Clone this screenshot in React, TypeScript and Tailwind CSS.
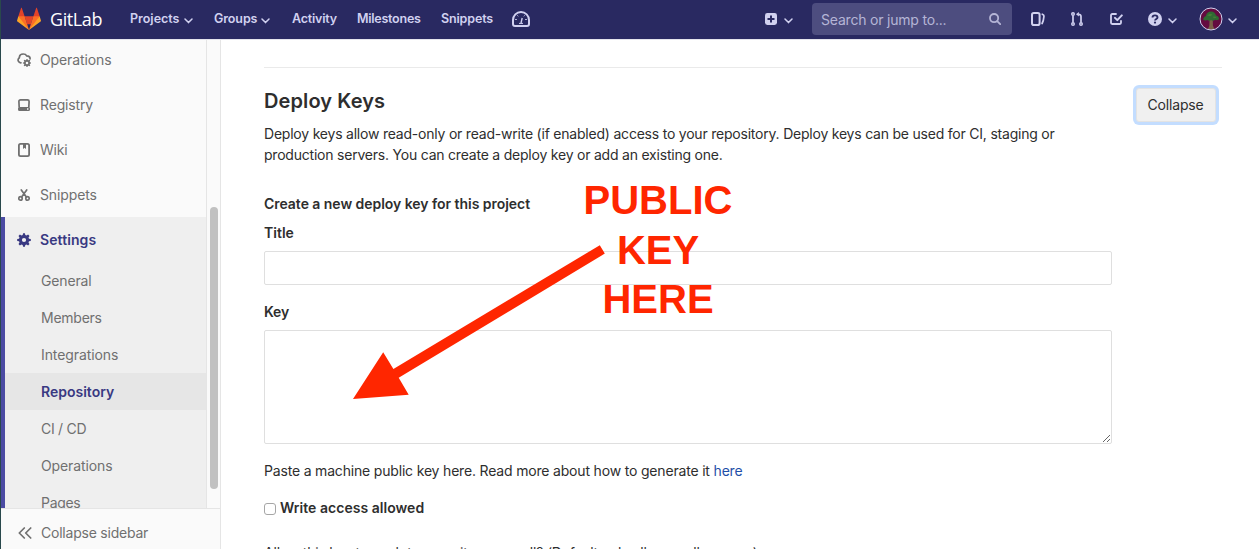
import React from "react";

type IconProps = { className?: string };

const Chevron = ({ className = "" }: IconProps) => (
  <svg className={`h-[6px] w-[9px] shrink-0 ${className}`} viewBox="0 0 9 6" fill="none" stroke="#d1d1f0" strokeWidth="1.5" strokeLinecap="round" strokeLinejoin="round">
    <path d="M1 1l3.5 3.6L8 1" />
  </svg>
);

const Tanuki = () => (
  <svg className="h-6 w-6 shrink-0" viewBox="0 0 36 36">
    <path fill="#e24329" d="M2 14l9.38 9v-9l-4-12.28c-.205-.632-1.176-.632-1.38 0z" />
    <path fill="#e24329" d="M34 14l-9.38 9v-9l4-12.28c.205-.632 1.176-.632 1.38 0z" />
    <path fill="#e24329" d="M18 34.38l3-8.38h-6z M18 34.38L11.38 14h13.24z" />
    <path fill="#fc6d26" d="M18 34.38L11.38 14H2l6 11.5z" />
    <path fill="#fc6d26" d="M18 34.38L24.62 14H34l-6 11.5z" />
    <path fill="#fca326" d="M2 14L.1 20.16c-.18.565 0 1.2.5 1.56l17.42 12.66z" />
    <path fill="#fca326" d="M34 14l1.9 6.16c.18.565 0 1.2-.5 1.56L18 34.38z" />
  </svg>
);

const Gauge = () => (
  <svg className="h-4 w-[18px] shrink-0" viewBox="0 0 18 16" fill="none" stroke="#d1d1f0">
    <path strokeWidth="2" d="M3 15h12a2 2 0 0 0 2-2V9A8 8 0 0 0 1 9v4a2 2 0 0 0 2 2z" />
    <path strokeWidth="1" d="M3.2 8.5h1.6M13.2 8.5h1.6M5.4 4.4l.8.9M12.6 4.4l-.8.9M7 12.4h4" />
    <path strokeWidth="1.4" d="M9 12l1.2-5" />
  </svg>
);

const PlusSquare = () => (
  <svg className="h-3 w-3 shrink-0" viewBox="0 0 12 12">
    <rect width="12" height="12" rx="2.4" fill="#d1d1f0" />
    <path d="M6 2.5v7M2.5 6h7" stroke="#292961" strokeWidth="2" />
  </svg>
);

const Search = () => (
  <svg className="h-3 w-3 shrink-0" viewBox="0 0 12 12" fill="none" stroke="#b5b5d6" strokeWidth="1.8" strokeLinecap="round">
    <circle cx="5.1" cy="5.1" r="4.1" />
    <path d="M8.2 8.2l3 3" />
  </svg>
);

const Issues = () => (
  <svg className="h-[14px] w-[14px] shrink-0" viewBox="0 0 14 14" fill="none" stroke="#d1d1f0" strokeWidth="2">
    <rect x="1" y="1" width="7.6" height="12" rx="1.8" />
    <path strokeLinecap="round" strokeWidth="1.7" d="M11.3 2.2c1.5.5 1.8 1.3 1.6 2.4-.2 2.6-.7 4.8-1.8 6.9" />
  </svg>
);

const MergeRequest = () => (
  <svg className="h-[14px] w-3 shrink-0" viewBox="0 0 12 14" fill="none" stroke="#d1d1f0" strokeWidth="1.5">
    <circle cx="2" cy="2" r="1.25" />
    <circle cx="2" cy="12" r="1.25" />
    <circle cx="10" cy="12" r="1.25" />
    <path strokeWidth="1.7" d="M2 3.5v7M10 10.5V4.5Q10 2.3 7.6 2.3" />
    <path fill="#d1d1f0" stroke="none" d="M7.9 0v4.6L5 2.3z" />
  </svg>
);

const Todo = () => (
  <svg className="h-3 w-[13px] shrink-0" viewBox="0 0 13 12" fill="none" stroke="#d1d1f0" strokeWidth="1.8" strokeLinecap="round" strokeLinejoin="round">
    <path d="M6 1H2.2A1.2 1.2 0 0 0 1 2.2v7.6A1.2 1.2 0 0 0 2.2 11h7.6a1.2 1.2 0 0 0 1.2-1.2V7.8" />
    <path strokeWidth="2" d="M5 4.900l2.300 2.200 4.500-4.700" />
  </svg>
);

const Help = () => (
  <svg className="h-[14px] w-[14px] shrink-0" viewBox="0 0 14 14">
    <circle cx="7" cy="7" r="7" fill="#d1d1f0" />
    <path fill="none" stroke="#292961" strokeWidth="1.9" d="M4.500 5.500c0-1.300 1.100-2.100 2.500-2.100s2.500.8 2.500 2c0 1.500-2.500 1.600-2.500 3.200" />
    <circle cx="7" cy="10.6" r="1.1" fill="#292961" />
  </svg>
);

const Avatar = () => (
  <svg className="h-6 w-6 shrink-0" viewBox="0 0 24 24">
    <circle cx="12" cy="12" r="11" fill="#640b40" />
    <path fill="#7a6148" d="M10.600 12h3.200l.1 6.500 1.500 3.700-3.400.6-3.200-.6 1.500-3.200z" />
    <path fill="#2f6a33" d="M4.200 12.500c.2-2 1.300-3 2.800-3.500.2-2.600 2.500-4.400 5-4.400 2.800 0 4.500 1.700 5 4 2 .4 3 1.700 3.100 3.500-1 1.500-2.800 1.200-4 .7-1.400 1.300-3 1.200-4 .3-1.200 1-2.600.9-3.700 0-1.500.7-3.200.6-4.200-.6z" />
    <path fill="#467d38" d="M8 8.400l3-1.700 2.500.8-2 1.800zM13.500 9.700l2.600-.3 1.600 1.400-2.800.5z" />
    <circle cx="12" cy="12" r="11" fill="none" stroke="#d1d1f0" strokeWidth="1" />
  </svg>
);

const gearPath =
  "M6.100.2h1.800l.4 1.800 1.200.5L11.100 1.500l1.400 1.400-1 1.600.5 1.200 1.800.4v1.800l-1.800.4-.5 1.200 1 1.600-1.400 1.400-1.600-1-1.200.5-.4 1.800H6.100L5.700 12l-1.200-.5-1.600 1-1.400-1.400 1-1.600L2 8.300.2 7.900V6.100L2 5.700l.5-1.200-1-1.600 1.400-1.400 1.600 1L5.700 2zM7 4.900a2.100 2.100 0 1 0 0 4.200 2.100 2.100 0 0 0 0-4.200z";

const CloudGear = () => (
  <svg className="h-[14px] w-[14px]" viewBox="0 0 14 14">
    <path fill="none" stroke="#707070" strokeWidth="1.7" strokeLinecap="round" d="M4 9.800A2.700 2.700 0 0 1 1.900 5.200 1.300 1.300 0 0 0 2.400 4C2.600 2.200 4.300 1 6.200 1c1.700 0 2.900.7 3.500 1.900 1.900 0 3.400 1 3.400 2.900" />
    <g transform="translate(5.800 5.800) scale(.6)">
      <path fill="#707070" fillRule="evenodd" d={gearPath} />
    </g>
  </svg>
);

const Disk = () => (
  <svg className="h-3 w-3" viewBox="0 0 12 12">
    <path fill="none" stroke="#707070" strokeWidth="1.7" d="M1.200 8.500L.9 2.500Q.9.900 2.500.9h7q1.600 0 1.600 1.600l-.3 6" />
    <path fill="#707070" fillRule="evenodd" d="M1.500 8h9A1.500 1.500 0 0 1 12 9.500v1a1.500 1.500 0 0 1-1.500 1.500h-9A1.500 1.500 0 0 1 0 10.500v-1A1.500 1.500 0 0 1 1.500 8zM9 9.300v1.400h1.400V9.300z" />
  </svg>
);

const Book = () => (
  <svg className="h-[14px] w-3" viewBox="0 0 12 14">
    <rect x=".9" y=".9" width="10.2" height="12.2" rx="1.6" fill="none" stroke="#707070" strokeWidth="1.8" />
    <path fill="#707070" d="M5 1h3v5L6.500 4.800 5 6z" />
  </svg>
);

const Scissors = () => (
  <svg className="h-3 w-3" viewBox="0 0 12 12" fill="none" stroke="#707070" strokeWidth="1.7">
    <circle cx="2.5" cy="9.4" r="1.7" />
    <circle cx="9.5" cy="9.4" r="1.7" />
    <path strokeLinecap="round" d="M3.600 8L8.700.9M8.400 8L3.300.9" />
  </svg>
);

const Gear = () => (
  <svg className="h-[14px] w-[14px]" viewBox="0 0 14 14">
    <path fill="#393982" fillRule="evenodd" d={gearPath} />
  </svg>
);

const DoubleLeft = () => (
  <svg className="h-3 w-[14px] shrink-0" viewBox="0 0 14 12" fill="none" stroke="#707070" strokeWidth="1.7" strokeLinecap="round" strokeLinejoin="round">
    <path d="M6.300 1L1.300 6l5 5M12.700 1l-5 5 5 5" />
  </svg>
);

const mainItems = [
  { label: "Operations", icon: <CloudGear />, track: "tracking-[-0.12px]" },
  { label: "Registry", icon: <Disk />, track: "tracking-[-0.15px]" },
  { label: "Wiki", icon: <Book />, track: "tracking-[-0.2px]" },
  { label: "Snippets", icon: <Scissors />, track: "tracking-[-0.12px]" },
];

const subItems = [
  { label: "General", track: "tracking-[-0.15px]" },
  { label: "Members", track: "tracking-[-0.25px]" },
  { label: "Integrations", track: "tracking-[-0.1px]" },
  { label: "Repository", track: "tracking-[0px]", active: true },
  { label: "CI / CD", track: "tracking-[-0.28px]" },
  { label: "Operations", track: "tracking-[-0.12px]" },
  { label: "Pages", track: "tracking-[-0.3px]" },
];

function Header() {
  return (
    <header className="z-10 flex h-[39px] shrink-0 items-center bg-[#292961] pb-px text-[12.5px] font-semibold text-[#d1d1f0] shadow-[0_1px_0_#e4e4ec]">
      <div className="flex w-[129px] items-center pl-4">
        <Tanuki />
        <span className="pl-[9px] font-['Open_Sans'] text-[18px] leading-[37px] font-normal tracking-[-0.4px] text-white">GitLab</span>
      </div>
      <div className="flex w-[84px] items-center">
        <span className="w-[54px]">Projects</span>
        <Chevron className="mt-[3px]" />
      </div>
      <div className="flex w-[78px] items-center">
        <span className="w-[47px] tracking-[-0.1px]">Groups</span>
        <Chevron className="mt-[3px]" />
      </div>
      <span className="w-[65px] tracking-[-0.2px]">Activity</span>
      <span className="w-[84px] tracking-[-0.25px]">Milestones</span>
      <span className="w-[71px] tracking-[-0.15px]">Snippets</span>
      <Gauge />
      <div className="ml-[235px] flex items-center gap-[7px]">
        <PlusSquare />
        <Chevron className="mt-[3px]" />
      </div>
      <div className="ml-[19px] flex h-8 w-[200px] items-center justify-between rounded-[4px] bg-[#4d4d7f] pr-[11px] pl-[9px] text-[14px] font-normal tracking-[-0.2px] text-[#b5b5d6]">
        <span className="pt-px">Search or jump to...</span>
        <Search />
      </div>
      <div className="ml-[19px] flex items-center">
        <Issues />
        <span className="w-[26px]" />
        <MergeRequest />
        <span className="w-[27px]" />
        <Todo />
        <span className="w-[25px]" />
        <Help />
        <Chevron className="mt-[3px] ml-[6px]" />
        <span className="w-[22px]" />
        <Avatar />
        <Chevron className="mt-[3px] ml-[5px]" />
      </div>
    </header>
  );
}

function Sidebar() {
  return (
    <aside className="flex w-[220px] shrink-0 flex-col border-r border-[#e5e5e5] bg-[#fafafa] text-[14px] text-[#707070]">
      <div className="flex h-[469px] overflow-hidden">
        <nav className="w-[206px] shrink-0 border-r border-[#e5e5e5]">
          <ul className="h-[178px]">
            {mainItems.map((item, i) => (
              <li key={item.label} className={i === 0 ? "mb-[2px] flex h-[41px] items-center pl-4" : "flex h-[45px] items-center pl-4"}>
                <span className="flex w-[14px] justify-center">{item.icon}</span>
                <span className={`ml-[9px] ${item.track}`}>{item.label}</span>
              </li>
            ))}
          </ul>
          <div className="border-l-4 border-[#4b4ba3] bg-[#efefef]">
            <div className="flex h-[45px] items-center pl-3 font-semibold text-[#393982]">
              <Gear />
              <span className="ml-[9px] tracking-[0.08px]">Settings</span>
            </div>
            <ul>
              {subItems.map((item) => (
                <li
                  key={item.label}
                  className={item.active ? "flex h-[37px] items-center bg-[#e6e6e6] pl-9 font-semibold text-[#393982]" : "flex h-[37px] items-center pl-9"}
                >
                  <span className={item.track}>{item.label}</span>
                </li>
              ))}
            </ul>
          </div>
        </nav>
        <div className="flex-1 pt-[168px] pl-[3px]">
          <div className="h-[282px] w-2 rounded-full bg-[#c1c1c1]" />
        </div>
      </div>
      <div className="flex flex-1 items-center gap-[9px] border-t border-[#e5e5e5] pt-[7px] pl-[17px]">
        <DoubleLeft />
        <span className="tracking-[-0.22px]">Collapse sidebar</span>
      </div>
    </aside>
  );
}

function Annotation() {
  return (
    <div className="pointer-events-none absolute inset-0 z-20">
      <svg className="absolute top-[240px] left-[350px] h-[165px] w-[260px]" viewBox="350 240 260 165" fill="#ff2600">
        <path d="M599.800 245.200L604.800 253.600L398.700 377.700L408.700 394.800L353 399L383.200 352.200L393.400 369.100z" />
      </svg>
      <div className="absolute top-[176px] left-[558px] w-[200px] text-center font-['Liberation_Sans'] text-[40px] leading-[49.5px] font-bold text-[#ff2600]">
        <div>PUBLIC</div>
        <div>KEY</div>
        <div>HERE</div>
      </div>
    </div>
  );
}

function DeployKeys() {
  return (
    <main className="min-w-0 flex-1 overflow-hidden bg-white pt-7 pr-[37px] pl-[43px] text-[14px] leading-[21px] text-[#2e2e2e]">
      <section className="border-t border-[#eaeaea]">
        <div className="flex items-start justify-between">
          <div className="w-[830px] pt-[19px]">
            <h4 className="text-[20px] leading-[28px] font-semibold tracking-[0.1px]">Deploy Keys</h4>
            <p className="pt-2">
              <span className="block tracking-[-0.215px] whitespace-nowrap">Deploy keys allow read-only or read-write (if enabled) access to your repository. Deploy keys can be used for CI, staging or</span>
              <span className="block tracking-[-0.215px] whitespace-nowrap">production servers. You can create a deploy key or add an existing one.</span>
            </p>
          </div>
          <button className="mt-5 mr-[6px] flex h-[34px] w-20 items-center justify-center rounded-[3px] border border-[#e3e3e3] bg-[#f0f0f0] pr-px pb-[2px] tracking-[-0.15px] shadow-[0_0_0_3px_#c3ddff]">Collapse</button>
        </div>
        <form className="w-[848px]">
          <h5 className="pt-7 font-semibold tracking-[-0.04px]">Create a new deploy key for this project</h5>
          <label className="block pt-2 font-semibold">Title</label>
          <input className="mt-2 block h-[34px] w-full rounded-[2px] border border-[#dfdfdf]" />
          <label className="block pt-4 font-semibold tracking-[-0.2px]">Key</label>
          <textarea className="mt-2 block h-[114px] w-full resize rounded-[2px] border border-[#dfdfdf]" />
          <p className="pt-4 tracking-[-0.18px]">
            <span>Paste a machine public key here. Read more about how to generate it </span>
            <a className="text-[#1f4fa8]">here</a>
          </p>
          <div className="flex items-center pt-4">
            <span className="mt-[2px] mr-1 h-3 w-3 rounded-[3px] border border-[#a6a6a6] bg-white" />
            <span className="font-semibold tracking-[0.03px]">Write access allowed</span>
          </div>
          <p className="pt-6 tracking-[-0.2px] whitespace-nowrap">Allow this key to push to repository as well? (Default only allows pull access.)</p>
        </form>
      </section>
    </main>
  );
}

export default function App() {
  return (
    <div className="relative flex h-[549px] w-[1259px] overflow-hidden bg-white font-['Inter',sans-serif]">
      <div className="w-px shrink-0 bg-[#29484c]" />
      <div className="flex min-w-0 flex-1 flex-col">
        <Header />
        <div className="flex min-h-0 flex-1">
          <Sidebar />
          <DeployKeys />
        </div>
      </div>
      <Annotation />
    </div>
  );
}
